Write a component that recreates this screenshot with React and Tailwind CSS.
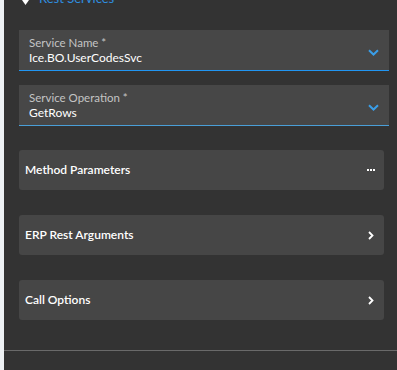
const ChevronDown = () => (
  <svg width="11" height="7" viewBox="0 0 11 7" fill="none">
    <path d="M1 1.2 L5.5 5.5 L10 1.2" stroke="#3a9ee8" strokeWidth="2" />
  </svg>
)

const ChevronRight = () => (
  <svg width="6" height="9" viewBox="0 0 6 9" fill="none">
    <path d="M1 1 L4.5 4.5 L1 8" stroke="#ffffff" strokeWidth="1.8" />
  </svg>
)

const Dots = () => (
  <div className="flex gap-[1px]">
    <span className="w-[2px] h-[2px] bg-white" />
    <span className="w-[2px] h-[2px] bg-white" />
    <span className="w-[2px] h-[2px] bg-white" />
  </div>
)

const Field = ({ label, value, border }) => (
  <div className={`relative h-[41px] bg-[#474747] pl-[10px] pt-[5px] ${border}`}>
    <div className="text-[11.5px] leading-[15px] text-[#c4c4c4]">{label}</div>
    <div className="text-[12px] leading-[16px] text-white">{value}</div>
    <div className="absolute right-[10px] top-[19px]">
      <ChevronDown />
    </div>
  </div>
)

const Card = ({ title, icon, className }) => (
  <div className={`h-[40px] mr-[5px] rounded-[3px] bg-[#464646] pl-[6px] pr-[8px] flex items-center justify-between ${className}`}>
    <span className="text-[12px] font-semibold text-white">{title}</span>
    <span className="w-[10px] flex justify-center">{icon}</span>
  </div>
)

export default function App() {
  return (
    <div className="flex h-[370px] w-[397px] overflow-hidden" style={{ fontFamily: 'Lato, "Open Sans", sans-serif' }}>
      <div className="w-[4px] bg-[#eef1f4]" />
      <div className="flex-1 bg-[#333333] flex flex-col">
        <div className="pl-[15px] pr-[8px]">
          <div className="-mt-[9px] h-[16px] flex items-center pl-[3px] gap-[10px]">
            <svg width="7" height="5" viewBox="0 0 7 5" className="mt-[7px]">
              <path d="M0 0 L7 0 L3.5 5 Z" fill="#ffffff" />
            </svg>
            <span className="text-[13px] text-[#2f8fe0]">Rest Services</span>
          </div>
          <div className="mt-[23px]">
            <Field label="Service Name *" value="Ice.BO.UserCodesSvc" border="border-b-[1.5px] border-[#2196f3]" />
          </div>
          <div className="mt-[14px]">
            <Field label="Service Operation *" value="GetRows" border="border-b border-[#4a9fd8]" />
          </div>
          <Card className="mt-[24px]" title="Method Parameters" icon={<Dots />} />
          <Card className="mt-[25px]" title="ERP Rest Arguments" icon={<ChevronRight />} />
          <Card className="mt-[25px]" title="Call Options" icon={<ChevronRight />} />
        </div>
        <div className="mt-[30px] h-px bg-[#6a6a6a]" />
      </div>
    </div>
  )
}
